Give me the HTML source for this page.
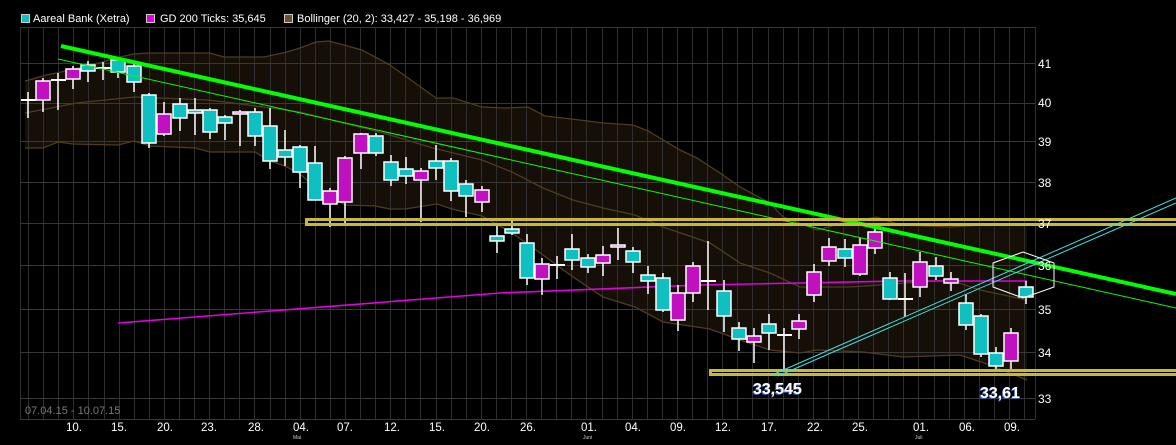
<!DOCTYPE html>
<html><head><meta charset="utf-8"><style>
html,body{margin:0;padding:0;background:#000;width:1176px;height:445px;overflow:hidden}
svg{display:block}
text{font-family:"Liberation Sans",sans-serif}
</style></head><body>
<svg width="1176" height="445" viewBox="0 0 1176 445" xmlns="http://www.w3.org/2000/svg">
<rect width="1176" height="445" fill="#000"/>
<rect x="21.5" y="14.5" width="8" height="8" fill="#10c0c0" stroke="#ccc" stroke-width="1"/>
<text x="33" y="22" font-size="11" fill="#fff">Aareal Bank (Xetra)</text>
<rect x="146.5" y="14.5" width="8" height="8" fill="#e000e0" stroke="#ccc" stroke-width="1"/>
<text x="160" y="22" font-size="11" fill="#fff">GD 200 Ticks: 35,645</text>
<rect x="284.5" y="14.5" width="8" height="8" fill="#6a5430" stroke="#ccc" stroke-width="1"/>
<text x="297" y="22" font-size="11" fill="#fff">Bollinger (20, 2): 33,427 - 35,198 - 36,969</text>

<polygon fill="#150f07" points="25,81 29,80 46,75 57,73 103,62 115,58 134,54 149,53 210,53 224,57 264,57 287,52 300,48 316,42 329,41 362,50 390,65 436,98 453,98 482,107 505,108 528,107 545,116 580,120 603,123 633,125 648,131 680,150 697,158 723,175 740,187 770,203 783,217 817,230 843,223 877,217 900,225 950,227 1000,224 1027,225 1027,380 990,365 960,355 903,357 863,352 817,350 800,353 770,350 740,340 710,329 663,322 635,307 603,297 573,277 543,255 512,233 482,216 452,209 437,204 405,209 390,209 375,206 345,205 310,183 300,174 285,166 270,161 255,152 210,152 195,148 150,146 134,141 118,145 73,144 58,142 43,148 25,148"/>

<g stroke="#2e2e2e" stroke-width="1">
<path d="M20.5 27V419M28.5 27V419M43.5 27V419M58.5 27V419M73.5 27V419M88.5 27V419M104.5 27V419M119.5 27V419M134.5 27V419M149.5 27V419M164.5 27V419M179.5 27V419M194.5 27V419M209.5 27V419M224.5 27V419M239.5 27V419M254.5 27V419M270.5 27V419M285.5 27V419M300.5 27V419M315.5 27V419M330.5 27V419M345.5 27V419M360.5 27V419M375.5 27V419M390.5 27V419M405.5 27V419M420.5 27V419M436.5 27V419M451.5 27V419M466.5 27V419M481.5 27V419M496.5 27V419M511.5 27V419M526.5 27V419M541.5 27V419M556.5 27V419M571.5 27V419M586.5 27V419M602.5 27V419M617.5 27V419M632.5 27V419M647.5 27V419M662.5 27V419M677.5 27V419M692.5 27V419M707.5 27V419M722.5 27V419M737.5 27V419M752.5 27V419M768.5 27V419M783.5 27V419M798.5 27V419M813.5 27V419M828.5 27V419M843.5 27V419M858.5 27V419M873.5 27V419M888.5 27V419M903.5 27V419M918.5 27V419M934.5 27V419M949.5 27V419M964.5 27V419M979.5 27V419M994.5 27V419M1009.5 27V419M1024.5 27V419M1035.5 27V419"/>
</g>
<g stroke="#383838" stroke-width="1">
<path d="M20 27.5H1035M20 63.5H1035M20 103.5H1035M20 141.5H1035M20 182.5H1035M20 223.5H1035M20 265.5H1035M20 309.5H1035M20 352.5H1035M20 398.5H1035M20 419.5H1035"/>
</g>

<g fill="none" stroke="#4e3d20" stroke-width="1.3">
<polyline points="25,81 29,80 46,75 57,73 103,62 115,58 134,54 149,53 210,53 224,57 264,57 287,52 300,48 316,42 329,41 362,50 390,65 436,98 453,98 482,107 505,108 528,107 545,116 580,120 603,123 633,125 648,131 680,150 697,158 723,175 740,187 770,203 783,217 817,230 843,223 877,217 900,225 950,227 1000,224 1027,225"/>
<polyline points="25,148 43,148 58,142 73,144 118,145 134,141 150,146 195,148 210,152 255,152 270,161 285,166 300,174 310,183 345,205 375,206 390,209 405,209 437,204 452,209 482,216 512,233 543,255 573,277 603,297 635,307 663,322 710,329 740,340 770,350 800,353 817,350 863,352 903,357 960,355 990,365 1027,380"/>
<polyline points="25,113 77,103 134,97 207,100 233,103 300,112 383,133 433,148 482,160 512,172 543,188 573,200 603,208 635,215 663,227 710,243 740,263 770,273 800,287 850,287 950,280 980,290 1027,300"/>
</g>

<polyline fill="none" stroke="#e000e0" stroke-width="1.6" points="118,323 500,293 700,285 900,281 1027,281"/>

<g stroke="#fff" stroke-width="1.5">
<path d="M28 92V118M43 78V112M58 73V110M73 66V89M88 61V82M103 62V80M118 57V78M134 63V92M149 93V148M164 102V136M180 98V131M195 98V135M210 108V139M225 115V140M240 110V146M255 108V146M270 108V169M285 130V166M300 145V188M315 146V200M330 188V227M345 156V223M361 133V169M376 133V156M391 155V186M406 157V184M421 168V222M436 145V180M451 158V201M466 180V217M482 186V212M497 226V253M512 221V235M527 234V285M542 258V295M557 256V279M572 234V270M588 254V273M603 246V276M618 228V260M633 247V273M648 266V294M663 273V312M678 285V331M693 262V302M708 241V310M724 280V332M739 322V351M754 328V363M769 314V350M784 328V372M799 314V339M814 264V302M829 238V266M845 239V267M860 238V276M875 226V254M890 272V300M905 273V317M920 252V297M936 257V280M951 272V291M966 294V330M981 314V357M996 347V370M1011 328V369M1026 281V304"/>
<path stroke-width="2" d="M21 100H36M51 80H66M96 68H111M550 265H565M701 281H716M777 335H792M898 299H913"/>
</g>
<g fill="#10c0c0" stroke="#fff" stroke-width="1.5">
<rect x="81" y="65" width="14" height="6"/><rect x="111" y="60" width="14" height="12"/><rect x="127" y="66" width="14" height="16"/><rect x="142" y="95" width="14" height="48"/><rect x="173" y="104" width="14" height="14"/><rect x="188" y="110" width="14" height="3"/><rect x="203" y="110" width="14" height="22"/><rect x="218" y="117" width="14" height="6"/><rect x="248" y="112" width="14" height="24"/><rect x="263" y="126" width="14" height="35"/><rect x="278" y="150" width="14" height="7"/><rect x="293" y="147" width="14" height="25"/><rect x="308" y="163" width="14" height="37"/><rect x="369" y="136" width="14" height="17"/><rect x="384" y="162" width="14" height="18"/><rect x="399" y="169" width="14" height="7"/><rect x="429" y="161" width="14" height="7"/><rect x="444" y="161" width="14" height="30"/><rect x="459" y="184" width="14" height="12"/><rect x="490" y="236" width="14" height="5"/><rect x="505" y="229" width="14" height="4"/><rect x="520" y="243" width="14" height="35"/><rect x="565" y="249" width="14" height="11"/><rect x="581" y="258" width="14" height="9"/><rect x="626" y="251" width="14" height="11"/><rect x="641" y="275" width="14" height="6"/><rect x="656" y="278" width="14" height="32"/><rect x="717" y="291" width="14" height="25"/><rect x="732" y="328" width="14" height="11"/><rect x="762" y="324" width="14" height="9"/><rect x="838" y="249" width="14" height="9"/><rect x="883" y="278" width="14" height="21"/><rect x="929" y="266" width="14" height="10"/><rect x="959" y="303" width="14" height="22"/><rect x="974" y="316" width="14" height="38"/><rect x="989" y="353" width="14" height="13"/><rect x="1019" y="287" width="14" height="10"/>
</g>
<g fill="#c010c0" stroke="#fff" stroke-width="1.5">
<rect x="36" y="81" width="14" height="19"/><rect x="66" y="69" width="14" height="10"/><rect x="157" y="114" width="14" height="20"/><rect x="233" y="112" width="14" height="2"/><rect x="323" y="191" width="14" height="13"/><rect x="338" y="158" width="14" height="44"/><rect x="354" y="134" width="14" height="19"/><rect x="414" y="171" width="14" height="9"/><rect x="475" y="190" width="14" height="12"/><rect x="535" y="264" width="14" height="15"/><rect x="596" y="255" width="14" height="8"/><rect x="611" y="245" width="14" height="2"/><rect x="671" y="293" width="14" height="27"/><rect x="686" y="266" width="14" height="27"/><rect x="747" y="336" width="14" height="6"/><rect x="792" y="321" width="14" height="8"/><rect x="807" y="272" width="14" height="23"/><rect x="822" y="247" width="14" height="14"/><rect x="853" y="245" width="14" height="29"/><rect x="868" y="232" width="14" height="16"/><rect x="913" y="262" width="14" height="25"/><rect x="944" y="279" width="14" height="4"/><rect x="1004" y="333" width="14" height="28"/>
</g>

<line x1="61" y1="46" x2="1176" y2="294" stroke="#00ff00" stroke-width="4"/>
<line x1="58" y1="59" x2="1176" y2="308" stroke="#00ff00" stroke-width="1"/>

<g fill="none" stroke="#c8b838" stroke-width="3">
<path d="M1176 219.5H306.5V224.5H1176"/>
<path d="M1176 370.5H710.5V374.5H1176"/>
</g>

<line x1="772" y1="375" x2="1176" y2="198" stroke="#40e0e0" stroke-width="1"/>
<line x1="778" y1="376" x2="1176" y2="203" stroke="#40e0e0" stroke-width="1"/>

<polygon fill="none" stroke="#fff" stroke-width="1" points="993,263 1023,252 1054,263 1054,287 1023,298 993,287"/>

<g font-size="12" fill="#fff">
<text x="1038" y="68">41</text><text x="1038" y="107">40</text><text x="1038" y="146">39</text><text x="1038" y="187">38</text><text x="1038" y="228">37</text><text x="1038" y="270">36</text><text x="1038" y="314">35</text><text x="1038" y="357">34</text><text x="1038" y="403">33</text>
</g>
<g font-size="11.5" fill="#fff">
<text x="66" y="431">10.</text><text x="111" y="431">15.</text><text x="157" y="431">20.</text><text x="201" y="431">23.</text><text x="248" y="431">28.</text><text x="293" y="431">04.</text><text x="337" y="431">07.</text><text x="384" y="431">12.</text><text x="429" y="431">15.</text><text x="474" y="431">20.</text><text x="520" y="431">26.</text><text x="581" y="431">01.</text><text x="625" y="431">04.</text><text x="670" y="431">09.</text><text x="715" y="431">12.</text><text x="761" y="431">17.</text><text x="807" y="431">22.</text><text x="852" y="431">25.</text><text x="913" y="431">01.</text><text x="959" y="431">06.</text><text x="1004" y="431">09.</text>
</g>
<g font-size="5" fill="#ccc">
<text x="293" y="439">Mai</text><text x="583" y="439">Juni</text><text x="915" y="439">Juli</text>
</g>
<text x="25" y="414" font-size="11" fill="#777">07.04.15 - 10.07.15</text>

<g font-size="16" font-weight="bold">
<text x="752" y="395" fill="#4060c0">33,545</text>
<text x="979" y="399" fill="#4060c0">33,61</text>
<text x="753" y="394" fill="#fff">33,545</text>
<text x="980" y="398" fill="#fff">33,61</text>
</g>
</svg>
</body></html>
